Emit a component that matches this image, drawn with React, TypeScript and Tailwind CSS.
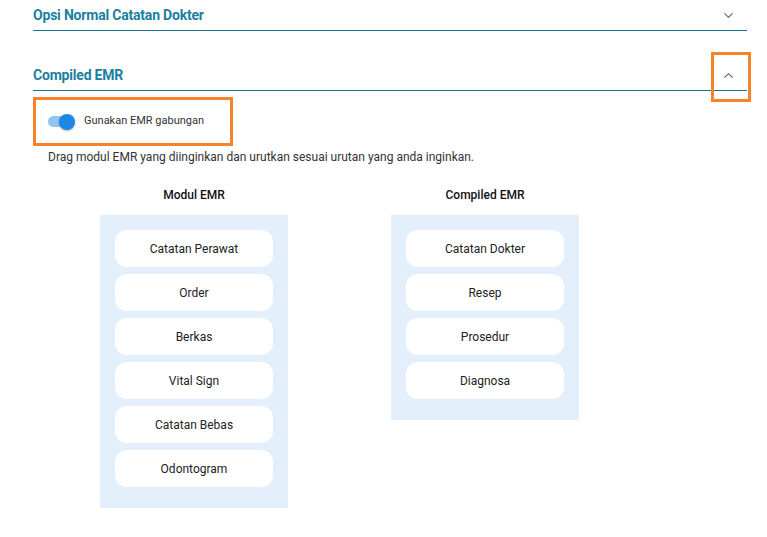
import { ChevronDown, ChevronUp } from 'lucide-react';

const modulEmr = ['Catatan Perawat', 'Order', 'Berkas', 'Vital Sign', 'Catatan Bebas', 'Odontogram'];
const compiledEmr = ['Catatan Dokter', 'Resep', 'Prosedur', 'Diagnosa'];

function EmrColumn({ title, items }: { title: string; items: string[] }) {
  return (
    <div className="flex w-[188px] flex-col items-center">
      <div className="flex h-[20px] items-center text-[12px] font-medium text-[#111]">{title}</div>
      <div className="mt-[10px] flex w-full flex-col gap-[7px] bg-[#e3f0fb] px-[15px] pb-[21px] pt-[15px]">
        {items.map((item) => (
          <div
            key={item}
            className="flex h-[37px] items-center justify-center rounded-[12px] bg-white text-[12px] text-[#222]"
          >
            {item}
          </div>
        ))}
      </div>
    </div>
  );
}

export default function App() {
  return (
    <div className="min-h-[537px] bg-white pl-[33px] pr-[20px] font-['Roboto',sans-serif]">
      <div className="flex h-[31px] items-center justify-between border-b border-[#1a7590]">
        <span className="text-[14px] font-bold tracking-[-0.2px] text-[#1a7fa0]">Opsi Normal Catatan Dokter</span>
        <ChevronDown className="mr-[11px] h-[15px] w-[15px] text-[#666]" strokeWidth={1.75} />
      </div>

      <div className="relative mt-[29px] flex h-[31px] items-center justify-between border-b border-[#1a7590]">
        <span className="text-[14px] font-bold tracking-[-0.2px] text-[#1a7fa0]">Compiled EMR</span>
        <ChevronUp className="mr-[11px] h-[15px] w-[15px] text-[#666]" strokeWidth={1.75} />
        <div className="absolute right-[-4px] top-[-8px] h-[50px] w-[40px] border-[3px] border-[#f7822c]" />
      </div>

      <div className="mt-[6px] flex h-[49px] w-[200px] items-center gap-[9px] border-[3px] border-[#f7822c] pl-[12px]">
        <div className="relative flex h-[16px] w-[27px] items-center">
          <div className="h-[11px] w-[26px] rounded-full bg-[#90c4f2]" />
          <div className="absolute right-0 h-[16px] w-[16px] rounded-full bg-[#1e86e3] shadow-[0_1px_2px_rgba(0,0,0,0.3)]" />
        </div>
        <span className="text-[11px] text-[#333]">Gunakan EMR gabungan</span>
      </div>

      <p className="ml-[15px] mt-[3px] text-[12px] leading-[16px] text-[#333]">
        Drag modul EMR yang diinginkan dan urutkan sesuai urutan yang anda inginkan.
      </p>

      <div className="ml-[67px] mt-[20px] flex items-start gap-[103px]">
        <EmrColumn title="Modul EMR" items={modulEmr} />
        <EmrColumn title="Compiled EMR" items={compiledEmr} />
      </div>
    </div>
  );
}
